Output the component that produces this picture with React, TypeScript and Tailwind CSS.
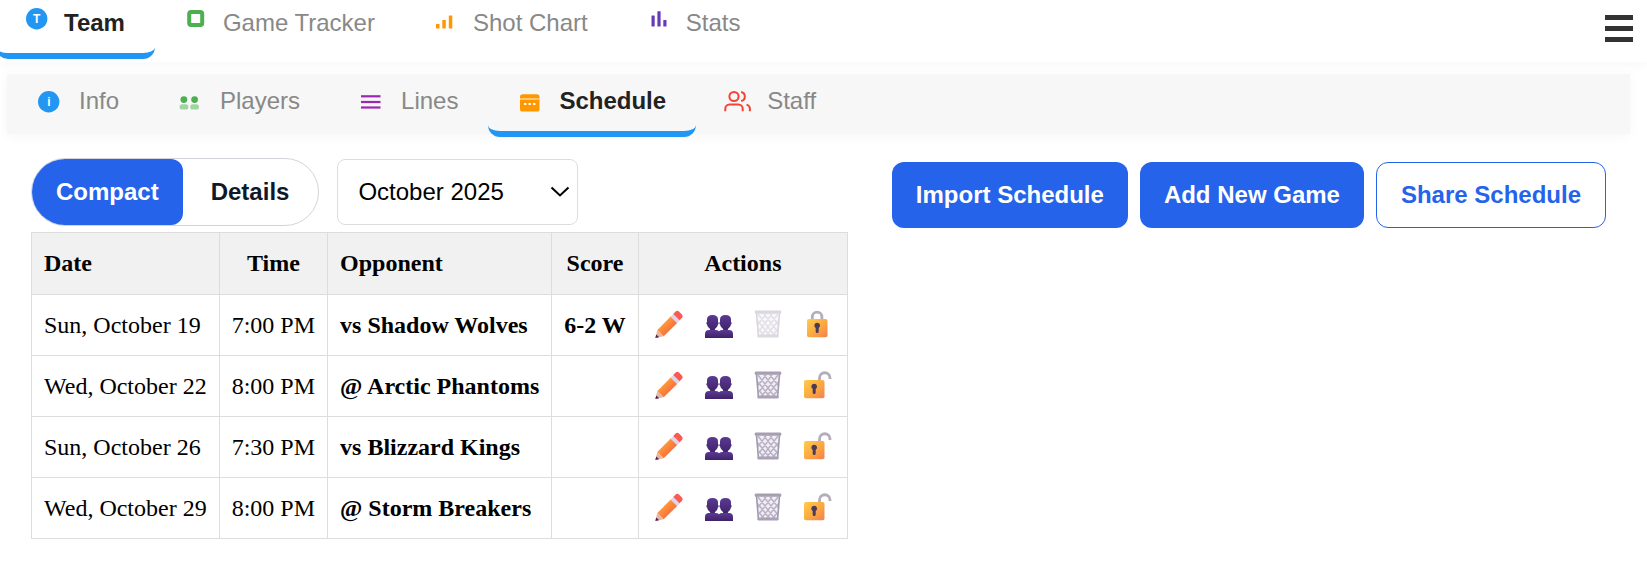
import type { ReactNode } from "react";

type Tab = { label: string; icon: ReactNode };

const mainTabs: Tab[] = [
  {
    label: "Team",
    icon: (
      <svg className="h-6 w-6" viewBox="0 0 24 24" aria-hidden="true">
        <circle cx="10.7" cy="10.7" r="10.7" fill="#2196f3" />
        <text x="10.7" y="14.5" textAnchor="middle" fontSize="12" fontWeight="700" fill="#fff">T</text>
      </svg>
    ),
  },
  {
    label: "Game Tracker",
    icon: (
      <svg className="h-6 w-6" viewBox="0 0 24 24" aria-hidden="true">
        <rect x="4.2" y="4" width="13" height="13" rx="2" fill="#fff" stroke="#4caf50" strokeWidth="4" />
      </svg>
    ),
  },
  {
    label: "Shot Chart",
    icon: (
      <svg className="h-6 w-6" viewBox="0 0 24 24" fill="#ff9800" aria-hidden="true">
        <rect x="1" y="16" width="3.5" height="4.5" rx=".5" />
        <rect x="7.3" y="12" width="3.5" height="8.5" rx=".5" />
        <rect x="13.8" y="7.5" width="3.5" height="13" rx=".5" />
      </svg>
    ),
  },
  {
    label: "Stats",
    icon: (
      <svg className="h-6 w-6" viewBox="0 0 24 24" fill="#673ab7" aria-hidden="true">
        <rect x="3.5" y="7.5" width="3.2" height="11" rx=".5" />
        <rect x="9.4" y="3.3" width="3.2" height="15.2" rx=".5" />
        <rect x="15.3" y="12" width="3.2" height="6.5" rx=".5" />
      </svg>
    ),
  },
];

const subTabs: Tab[] = [
  {
    label: "Info",
    icon: (
      <svg className="mt-1 h-6 w-6" viewBox="0 0 24 24" aria-hidden="true">
        <circle cx="10.7" cy="11.7" r="10.7" fill="#2196f3" />
        <text x="10.9" y="16" textAnchor="middle" fontSize="12" fontWeight="700" fill="#fff">i</text>
      </svg>
    ),
  },
  {
    label: "Players",
    icon: (
      <svg className="mt-1 h-6 w-6" viewBox="0 0 24 24" fill="#4caf50" aria-hidden="true">
        <circle cx="4.9" cy="9.6" r="3.4" />
        <circle cx="15.6" cy="9.6" r="3.4" />
        <rect x=".6" y="14.2" width="8.8" height="5.4" rx="2.7" opacity=".5" />
        <rect x="11.2" y="14.2" width="8.8" height="5.4" rx="2.7" opacity=".5" />
      </svg>
    ),
  },
  {
    label: "Lines",
    icon: (
      <svg className="mt-1 h-6 w-6" viewBox="0 0 24 24" fill="#9c27b0" aria-hidden="true">
        <rect x="1" y="5.2" width="19.5" height="2.2" />
        <rect x="1" y="10.9" width="19.5" height="2.2" />
        <rect x="1" y="16.4" width="19.5" height="2.2" />
      </svg>
    ),
  },
  {
    label: "Schedule",
    icon: (
      <svg className="mt-1 h-6 w-6" viewBox="0 0 24 24" aria-hidden="true">
        <rect x="2" y="4.2" width="19.5" height="17.3" rx="2.6" fill="#ff9800" />
        <path d="M2 9h19.500" stroke="#fff" strokeWidth="1.2" opacity=".75" />
        <path d="M6 13.900h2.400M10.500 13.900h2.400M15 13.900h2.400" stroke="#fff" strokeWidth="2" />
      </svg>
    ),
  },
  {
    label: "Staff",
    icon: (
      <svg className="mt-1 h-6 w-6 overflow-visible" viewBox="0 0 24 24" fill="none" stroke="#f44336" strokeWidth="2" aria-hidden="true">
        <circle cx="8" cy="6.5" r="4.6" />
        <path d="M-.7 21.300v-2.600a4.300 4.300 0 0 1 4.300-4.300h8.800a4.300 4.300 0 0 1 4.300 4.300v2.600M23.900 21.300v-2.200a4.600 4.600 0 0 0-3.400-4.500M15.100 1.900a4.700 4.700 0 0 1 0 9.200" />
      </svg>
    ),
  },
];

function TabButton({ tab, active, gap }: { tab: Tab; active: boolean; gap: string }) {
  return (
    <button
      type="button"
      aria-current={active ? "page" : undefined}
      className={`flex items-start rounded-xl border-b-6 px-[30px] text-2xl ${gap} ${
        active ? "border-[#2196f3] font-bold text-[#222]" : "border-transparent text-[#888]"
      }`}
    >
      {tab.icon}
      <span className="leading-[30px]">{tab.label}</span>
    </button>
  );
}

const Pencil = () => (
  <svg className="h-8 w-8" viewBox="0 0 32 32" aria-hidden="true">
    <defs>
      <linearGradient id="pencilBody" x1="0" y1="0" x2="1" y2="1">
        <stop offset=".3" stopColor="#ff9b3d" />
        <stop offset=".8" stopColor="#f4643c" />
      </linearGradient>
    </defs>
    <path d="M3.300 21 17 7.300l6.400 6.400L9.700 27.300z" fill="url(#pencilBody)" />
    <path d="M16.600 7.700l3.200-3.200 6.400 6.400-3.200 3.200z" fill="#ded3ea" />
    <path d="M19.300 5l2.300-2.400a2.400 2.400 0 0 1 3.400 0l2.900 2.900a2.400 2.400 0 0 1 0 3.400L25.600 11.300z" fill="#fb5a50" />
    <path d="M3.300 21l6.400 6.300L1.500 28.800z" fill="#e9b59c" />
    <path d="M2.200 25.500l3 2.800-3.900.7z" fill="#4a2450" />
  </svg>
);

const People = () => (
  <svg className="h-8 w-8" viewBox="0 0 32 32" aria-hidden="true">
    <defs>
      <linearGradient id="peopleFill" x1="0" y1="0" x2="0" y2="1">
        <stop offset="0" stopColor="#5a3a94" />
        <stop offset="1" stopColor="#3f2268" />
      </linearGradient>
    </defs>
    <g fill="url(#peopleFill)">
      <path d="M4 13V10.500C4 7.500 5.800 6 9.500 6S15 7.500 15 10.500V13c.9.200.9 2.300-.1 2.600-.3 2-1.500 3.500-3 4.300V22H7.100v-2.100c-1.500-.8-2.700-2.300-3-4.300C3.100 15.300 3.100 13.200 4 13z" />
      <path d="M17 13V10.500C17 7.500 18.800 6 22.500 6S28 7.500 28 10.500V13c.9.200.9 2.300-.1 2.600-.3 2-1.500 3.500-3 4.300V22h-4.800v-2.100c-1.500-.8-2.700-2.300-3-4.300-1-.3-1-2.400-.1-2.600z" />
      <path d="M2 29v-4a4 4 0 0 1 4-4h6.500q2.400 0 3.500 1.300Q17.100 21 19.500 21H26a4 4 0 0 1 4 4v4z" />
    </g>
  </svg>
);

const Trash = () => (
  <svg className="h-8 w-8" viewBox="0 0 32 32" aria-hidden="true">
    <path d="M4 4h24l-2 23.500H6z" fill="#f1eef5" />
    <path
      d="M6 5l17 22M12 5l14 18M18 5l9 11.500M6 12l12 15M7 20l5 7M26 5 9 27M20 5 7 22M14 5l-8 10.500M26 12 14 27M25.500 20l-5 7"
      fill="none"
      stroke="#b9b1c4"
      strokeWidth="1.500"
    />
    <path d="M4.500 4l2 24M27.500 4l-2 24" stroke="#a199ae" strokeWidth="1.600" />
    <rect x="2.700" y="1.500" width="26.600" height="3.200" rx="1.200" fill="#a79eb2" />
    <rect x="5.500" y="25.500" width="21" height="3" rx="1.200" fill="#aaa1b5" />
  </svg>
);

const Lock = ({ open = false }: { open?: boolean }) => (
  <svg className="h-8 w-8" viewBox="0 0 32 32" aria-hidden="true">
    <defs>
      <linearGradient id="lockBody" x1="0" y1="0" x2="1" y2="1">
        <stop offset="0" stopColor="#ffcc4a" />
        <stop offset=".5" stopColor="#fbab42" />
        <stop offset="1" stopColor="#f47f4f" />
      </linearGradient>
    </defs>
    <path
      d={open ? "M18.500 12V8a5 5 0 0 1 10.500 0v1" : "M11.300 12V8a4.800 4.800 0 0 1 9.600 0v4"}
      fill="none"
      stroke="#b5adba"
      strokeWidth="2.800"
    />
    <g transform={open ? "translate(-3 0)" : undefined}>
      <rect x="6" y="10" width="20.500" height="18.300" rx="2" fill="url(#lockBody)" />
      <path d="M16.200 13.800a2.800 2.800 0 0 1 1.500 5.200v3.500a1.500 1.500 0 0 1-3 0V19a2.800 2.800 0 0 1 1.500-5.200z" fill="#4b3a58" />
    </g>
  </svg>
);

const games = [
  { date: "Sun, October 19", time: "7:00 PM", opponent: "vs Shadow Wolves", score: "6-2 W", locked: true },
  { date: "Wed, October 22", time: "8:00 PM", opponent: "@ Arctic Phantoms", score: "", locked: false },
  { date: "Sun, October 26", time: "7:30 PM", opponent: "vs Blizzard Kings", score: "", locked: false },
  { date: "Wed, October 29", time: "8:00 PM", opponent: "@ Storm Breakers", score: "", locked: false },
];

const primary = "rounded-xl bg-[#2563eb] px-6 py-[19px] leading-7 whitespace-nowrap text-white";
const outline = "rounded-xl border border-[#2563eb] bg-white px-6 py-[18px] leading-7 whitespace-nowrap text-[#2563eb]";
const headCell = "border border-[#ddd] px-3 pt-4 pb-[17px]";
const cell = "border border-[#ddd] px-3 py-4";

export default function App() {
  return (
    <div className="min-h-screen bg-white font-['Liberation_Sans',Arial,sans-serif] text-2xl text-black">
      <header className="flex h-[62px] items-start justify-between bg-white shadow-[0_2px_12px_rgba(0,0,0,0.04)]">
        <nav aria-label="Main" className="-ml-1 flex">
          {mainTabs.map((tab, i) => (
            <div key={tab.label} className="flex h-[59px] pt-2">
              <TabButton tab={tab} active={i === 0} gap="gap-[14px]" />
            </div>
          ))}
        </nav>
        <button type="button" aria-label="Menu" className="mt-[15px] mr-[14px] flex flex-col gap-[6px]">
          <span className="h-[5px] w-7 bg-[#333]" />
          <span className="h-[5px] w-7 bg-[#333]" />
          <span className="h-[5px] w-7 bg-[#333]" />
        </button>
      </header>

      <main className="mr-[5px] pt-3">
        <nav aria-label="Team" className="mr-3 ml-[7px] flex h-[60px] bg-[#f7f7f7] pl-px shadow-[0_2px_12px_rgba(0,0,0,0.04)]">
          {subTabs.map((tab, i) => (
            <div key={tab.label} className="flex h-[63px] pt-3">
              <TabButton tab={tab} active={i === 3} gap="gap-[17px]" />
            </div>
          ))}
        </nav>

        <section className="pt-6 pr-9 pl-[31px]">
          <div className="flex flex-wrap items-start justify-between gap-3">
            <div className="flex items-center gap-[18px]">
              <div className="flex overflow-hidden rounded-full border border-[#d1d5db] font-bold">
                <button type="button" aria-pressed="true" className="rounded-r-xl bg-[#2563eb] px-6 py-[19px] leading-7 text-white">
                  Compact
                </button>
                <button type="button" aria-pressed="false" className="py-[19px] pr-[29px] pl-7 leading-7 text-[#111827]">
                  Details
                </button>
              </div>
              <div className="grid items-center">
                <select
                  aria-label="Month"
                  className="col-start-1 row-start-1 h-[66px] w-[241px] appearance-none rounded-lg border border-[#ddd] bg-white px-5"
                >
                  <option>October 2025</option>
                </select>
                <svg className="pointer-events-none col-start-1 row-start-1 mr-2 h-5 w-5 justify-self-end" viewBox="0 0 20 20" fill="none" stroke="#000" strokeWidth="2" aria-hidden="true">
                  <path d="M1.500 5.500l8.500 8 8.500-8" />
                </svg>
              </div>
            </div>
            <div className="flex gap-3 pt-1 font-bold">
              <button type="button" className={primary}>Import Schedule</button>
              <button type="button" className={primary}>Add New Game</button>
              <button type="button" className={outline}>Share Schedule</button>
            </div>
          </div>

          <table className="mt-1 border-collapse font-['Liberation_Serif','Times_New_Roman',serif] leading-7 whitespace-nowrap">
            <thead>
              <tr className="bg-[#f1f1f1] text-center">
                <th className={`${headCell} text-left`}>Date</th>
                <th className={headCell}>Time</th>
                <th className={`${headCell} text-left`}>Opponent</th>
                <th className={headCell}>Score</th>
                <th className={headCell}>Actions</th>
              </tr>
            </thead>
            <tbody>
              {games.map((game) => (
                <tr key={game.date}>
                  <td className={cell}>{game.date}</td>
                  <td className={cell}>{game.time}</td>
                  <td className={`${cell} font-bold`}>{game.opponent}</td>
                  <td className={`${cell} font-bold`}>{game.score}</td>
                  <td className="border border-[#ddd] pr-[14px] pl-[15px]">
                    <div className="flex gap-[17px]">
                      <button type="button" aria-label="Edit game"><Pencil /></button>
                      <button type="button" aria-label="Game roster"><People /></button>
                      <button type="button" aria-label="Delete game" disabled={game.locked} className="disabled:opacity-40"><Trash /></button>
                      <button type="button" aria-label={game.locked ? "Unlock game" : "Lock game"}><Lock open={!game.locked} /></button>
                    </div>
                  </td>
                </tr>
              ))}
            </tbody>
          </table>
        </section>
      </main>
    </div>
  );
}
